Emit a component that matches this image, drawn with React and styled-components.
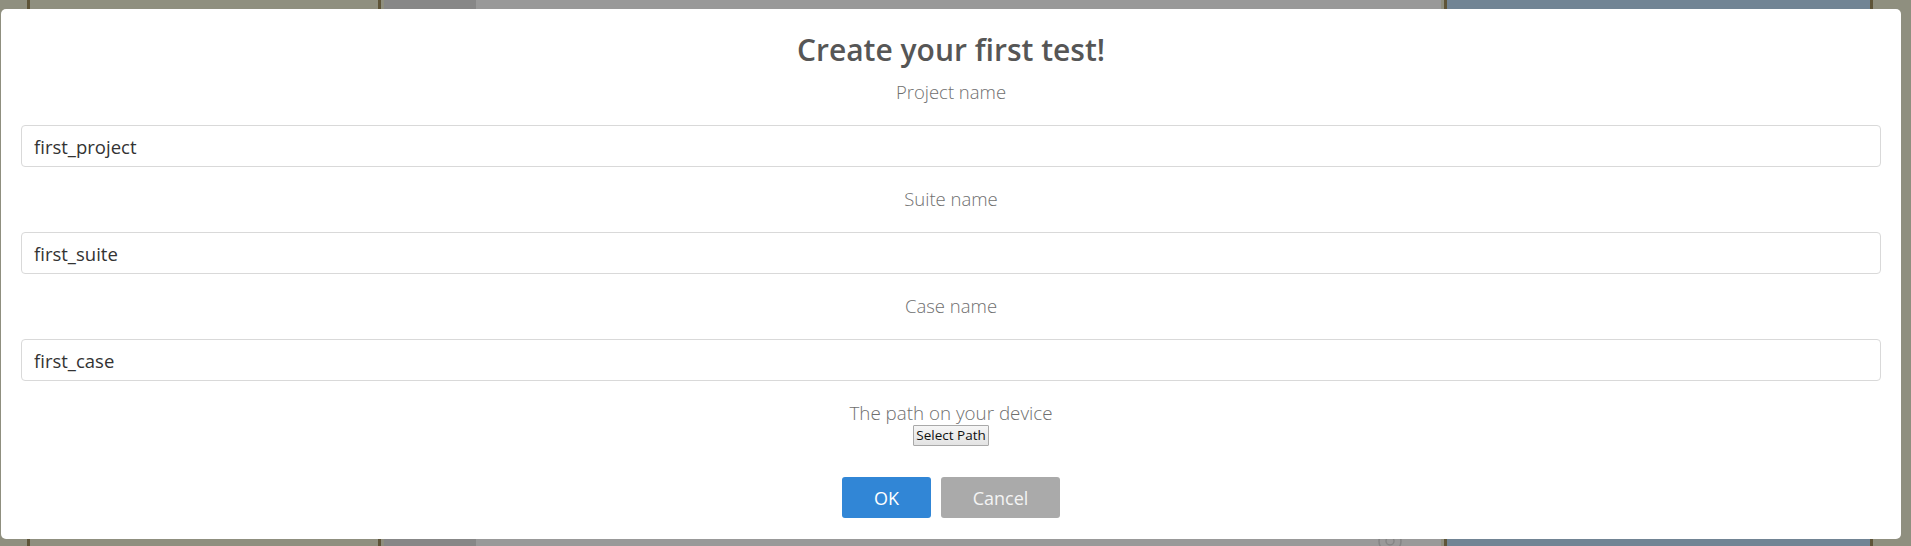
import React from "react";
import styled, { createGlobalStyle } from "styled-components";

const GlobalStyle = createGlobalStyle`
  html, body { margin: 0; padding: 0; }
  body { font-family: "Open Sans", "Noto Sans", sans-serif; overflow: hidden; }
  * { box-sizing: border-box; }
`;

const Page = styled.div`
  position: relative;
  width: 1911px;
  height: 546px;
  overflow: hidden;
  display: flex;
`;

const Column = styled.div`
  flex: 0 0 ${(p) => p.$w}px;
  height: 100%;
  background: ${(p) => p.$bg};
  position: relative;
`;

const Backdrop = styled.div`
  position: absolute;
  inset: 0;
  display: flex;
`;

const RecordIcon = styled.svg`
  position: absolute;
  left: 1378px;
  top: 529px;
`;

const Modal = styled.div`
  position: absolute;
  top: 9px;
  left: 1px;
  width: 1900px;
  height: 530px;
  background: #ffffff;
  border-radius: 5px;
  padding: 23px 20px 20px;
  display: flex;
  flex-direction: column;
  align-items: center;
`;

const Title = styled.h2`
  margin: 0;
  font-family: "Open Sans", sans-serif;
  font-weight: 600;
  font-size: 30px;
  line-height: 36px;
  color: #565656;
`;

const Label = styled.div`
  font-family: "Open Sans", sans-serif;
  font-weight: 300;
  font-size: ${(p) => p.$size || 18.5}px;
  line-height: 24px;
  color: #6f6f6f;
  margin-top: ${(p) => p.$top}px;
  margin-bottom: ${(p) => p.$bottom}px;
`;

const TextInput = styled.input`
  width: 100%;
  height: 42px;
  border: 1px solid #d9d9d9;
  border-radius: 4px;
  padding: 0 12px;
  font-family: "Open Sans", sans-serif;
  font-size: 18.5px;
  color: #333333;
  background: #ffffff;
  outline: none;
`;

const PathButton = styled.button`
  width: 76px;
  height: 21px;
  padding: 0;
  margin: 0;
  border: 1px solid #a9a9a9;
  border-radius: 1px;
  background: linear-gradient(#f6f6f6, #e3e3e3);
  font-family: "Open Sans", sans-serif;
  font-size: 13.5px;
  line-height: 19px;
  color: #111111;
`;

const Actions = styled.div`
  display: flex;
  gap: 10px;
  margin-top: 31px;
`;

const ActionButton = styled.button`
  height: 41px;
  width: ${(p) => p.$w}px;
  border: none;
  border-radius: 3px;
  background: ${(p) => p.$bg};
  color: ${(p) => p.$fg};
  font-family: "Open Sans", sans-serif;
  font-size: 18px;
  padding: 0;
`;

const columns = [
  { w: 27, bg: "#8f8f7f" },
  { w: 3, bg: "#5e5438" },
  { w: 348, bg: "#8f8f7f" },
  { w: 3, bg: "#5e5438" },
  { w: 3, bg: "#8f8f7f" },
  { w: 92, bg: "#878787" },
  { w: 965, bg: "#999999" },
  { w: 3, bg: "#8f8f7f" },
  { w: 3, bg: "#5e5438" },
  { w: 423, bg: "#718494" },
  { w: 3, bg: "#5e5438" },
  { w: 38, bg: "#8f8f7f" },
];

const fields = [
  { label: "Project name", value: "first_project", top: 12 },
  { label: "Suite name", value: "first_suite", top: 20 },
  { label: "Case name", value: "first_case", top: 20 },
];

export default function App() {
  return (
    <>
      <GlobalStyle />
      <Page>
        <Backdrop>
          {columns.map((c, i) => (
            <Column key={i} $w={c.w} $bg={c.bg} />
          ))}
        </Backdrop>
        <RecordIcon width="24" height="24" viewBox="0 0 24 24">
          <circle cx="12" cy="12" r="11" fill="none" stroke="#858585" strokeWidth="1.5" />
          <circle cx="12" cy="12" r="4" fill="none" stroke="#858585" strokeWidth="1.5" />
        </RecordIcon>
        <Modal>
          <Title>Create your first test!</Title>
          {fields.map((f) => (
            <React.Fragment key={f.label}>
              <Label $top={f.top} $bottom={21}>{f.label}</Label>
              <TextInput defaultValue={f.value} />
            </React.Fragment>
          ))}
          <Label $top={20} $bottom={0} $size={18.8}>The path on your device</Label>
          <PathButton>Select Path</PathButton>
          <Actions>
            <ActionButton $w={89} $bg="#3186d6" $fg="#ffffff">OK</ActionButton>
            <ActionButton $w={119} $bg="#aaaaaa" $fg="#f4f4f4">Cancel</ActionButton>
          </Actions>
        </Modal>
      </Page>
    </>
  );
}
